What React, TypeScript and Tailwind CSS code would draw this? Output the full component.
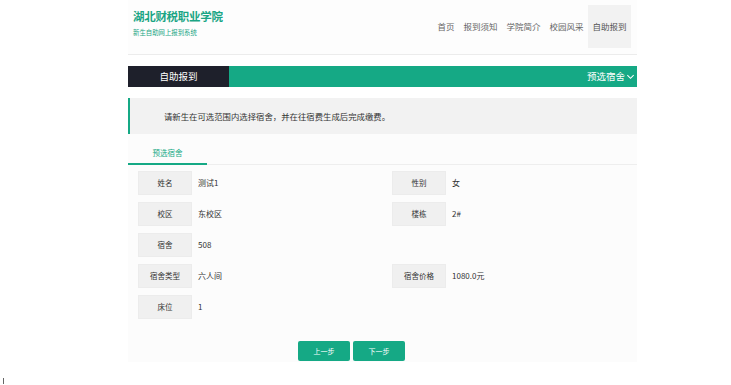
import React from "react";

const F = { fontFamily: '"Noto Sans CJK SC", "Noto Sans", sans-serif' };

function Field({ label, value }: { label: string; value: string }) {
  return (
    <div className="flex items-center h-[24px]">
      <div className="w-[54px] h-[24px] flex items-center justify-center bg-[#f0f0f0] border border-[#ececec] text-[7.5px] text-[#333]">
        {label}
      </div>
      <div className="ml-[6px] text-[8px] text-[#333]">{value}</div>
    </div>
  );
}

export default function App() {
  const nav = ["首页", "报到须知", "学院简介", "校园风采", "自助报到"];
  return (
    <div className="w-[731px] h-[385px] bg-white relative overflow-hidden" style={F}>
      <div className="ml-[128px] w-[509px]">
        {/* header */}
        <div className="h-[55px] flex justify-between border-b border-[#ececec] bg-[#fdfdfd]">
          <div className="pl-[5px] pt-[8px]">
            <div className="text-[11.5px] font-bold text-[#1aa584] leading-[16px] tracking-[-0.3px]">湖北财税职业学院</div>
            <div className="mt-[5px] text-[6.4px] text-[#1aa584] leading-[8px]">新生自助网上报到系统</div>
          </div>
          <div className="flex items-start pt-[5px] pr-[6px]">
            {nav.map((n, i) => (
              <div
                key={n}
                className={
                  "h-[43px] flex items-center px-[4.5px] text-[8.5px] " +
                  (i === nav.length - 1 ? "bg-[#f2f2f2] text-[#555]" : "text-[#666]")
                }
              >
                {n}
              </div>
            ))}
          </div>
        </div>

        {/* bar */}
        <div className="mt-[11px] h-[21px] flex">
          <div className="w-[101px] bg-[#1e202b] flex items-center justify-center text-white text-[9.5px]">自助报到</div>
          <div className="flex-1 bg-[#15a985] flex items-center justify-end pr-[2px] text-white text-[9.5px]">
            预选宿舍
            <svg width="9" height="9" viewBox="0 0 10 10" className="ml-[1px]">
              <path d="M1.5 3.5 L5 7 L8.5 3.5" fill="none" stroke="white" strokeWidth="1.2" />
            </svg>
          </div>
        </div>

        {/* alert */}
        <div className="mt-[11px] h-[36px] border-l-2 border-[#15a985] bg-[#f2f2f2] flex items-center pl-[34px] text-[8.4px] text-[#333]">
          请新生在可选范围内选择宿舍，并在往宿费生成后完成缴费。
        </div>

        {/* panel */}
        <div className="bg-[#fcfcfc] pb-[1px]">
          <div className="pt-[13px] flex border-b border-[#eeeeee]">
            <div className="w-[79px] h-[18px] flex items-start justify-center text-[7.5px] text-[#15a985] border-b-2 border-[#15a985] -mb-[1px]">
              预选宿舍
            </div>
          </div>
          <div className="pl-[10px] pt-[6px] grid grid-cols-[254px_1fr] gap-y-[7px]">
            <Field label="姓名" value="测试1" />
            <Field label="性别" value="女" />
            <Field label="校区" value="东校区" />
            <Field label="楼栋" value="2#" />
            <Field label="宿舍" value="508" />
            <div />
            <Field label="宿舍类型" value="六人间" />
            <Field label="宿舍价格" value="1080.0元" />
            <Field label="床位" value="1" />
            <div />
          </div>
          <div className="mt-[22px] flex gap-[3px] pl-[170px]">
            <div className="w-[52px] h-[20px] bg-[#15a985] rounded-[2px] flex items-center justify-center text-white text-[7px]">上一步</div>
            <div className="w-[52px] h-[20px] bg-[#15a985] rounded-[2px] flex items-center justify-center text-white text-[7px]">下一步</div>
          </div>
        </div>
      </div>
      <div className="absolute left-[3px] top-[378px] w-[1px] h-[6px] bg-[#666]" />
    </div>
  );
}
